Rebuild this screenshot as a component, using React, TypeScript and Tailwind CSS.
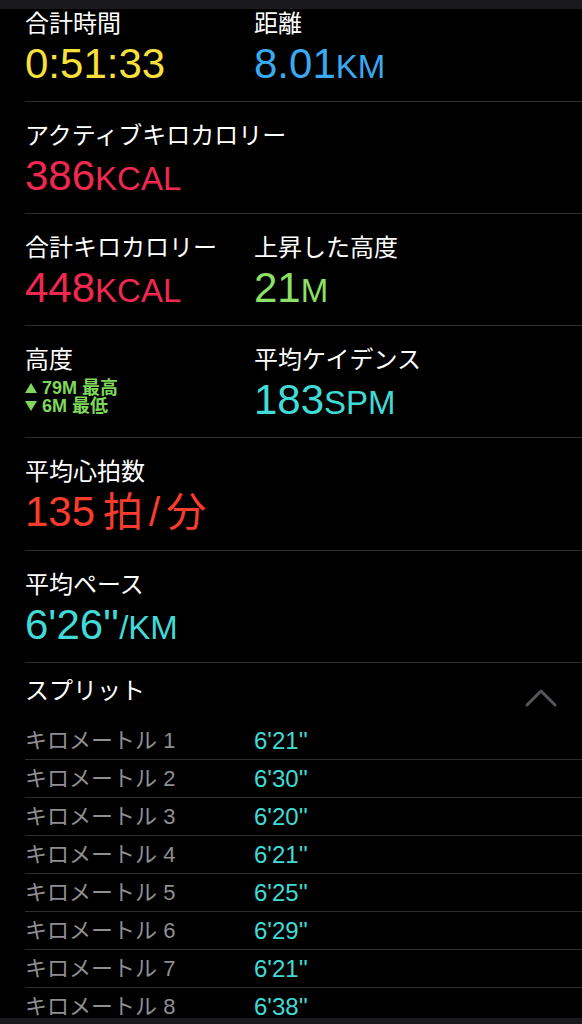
import React from "react";

const font = { fontFamily: '"Liberation Sans", "Noto Sans CJK JP", sans-serif' };

function Value({ num, unit, color }: { num: string; unit?: string; color: string }) {
  return (
    <div className={`mt-[5px] leading-[44px] whitespace-nowrap ${color}`}>
      <span className="text-[42px]">{num}</span>
      {unit && <span className="text-[33px]">{unit}</span>}
    </div>
  );
}

function Label({ children }: { children: React.ReactNode }) {
  return <div className="text-[24px] leading-[26px] text-white whitespace-nowrap">{children}</div>;
}

function Tri({ down }: { down?: boolean }) {
  return (
    <svg width="12" height="12" viewBox="0 0 12 12" className="shrink-0 w-[12px] h-[12px] mr-[5px]">
      <path d={down ? "M0 1 L12 1 L6 11 Z" : "M6 1 L12 11 L0 11 Z"} fill="#7fd85c" />
    </svg>
  );
}

const splits = ["6'21''", "6'30''", "6'20''", "6'21''", "6'25''", "6'29''", "6'21''", "6'38''"];

export default function App() {
  return (
    <div className="relative w-[582px] h-[1024px] overflow-hidden bg-black" style={font}>
      <div className="absolute top-0 left-0 right-0 h-[9px] bg-[#1a1a1c] z-10"></div>
      <div className="absolute bottom-0 left-0 right-0 h-[6px] bg-[#1a1a1c] z-10"></div>

      <div className="-mt-[10px] pl-[25px]">
        {/* 合計時間 / 距離 */}
        <div className="h-[112px] pt-[21px] border-b border-[#2e2e30] flex">
          <div className="w-[229px]">
            <Label>合計時間</Label>
            <Value num="0:51:33" color="text-[#f8e03c]" />
          </div>
          <div>
            <Label>距離</Label>
            <Value num="8.01" unit="KM" color="text-[#3aa9f1]" />
          </div>
        </div>

        <div className="h-[112px] pt-[21px] border-b border-[#2e2e30]">
          <Label>アクティブキロカロリー</Label>
          <Value num="386" unit="KCAL" color="text-[#f0284f]" />
        </div>

        <div className="h-[112px] pt-[21px] border-b border-[#2e2e30] flex">
          <div className="w-[229px]">
            <Label>合計キロカロリー</Label>
            <Value num="448" unit="KCAL" color="text-[#f0284f]" />
          </div>
          <div>
            <Label>上昇した高度</Label>
            <Value num="21" unit="M" color="text-[#8be065]" />
          </div>
        </div>

        <div className="h-[112px] pt-[21px] border-b border-[#2e2e30] flex">
          <div className="w-[229px]">
            <Label>高度</Label>
            <div className="mt-[6px] text-[18px] leading-[18px] font-bold text-[#7fd85c] whitespace-nowrap">
              <div className="flex items-center"><Tri />79M 最高</div>
              <div className="flex items-center"><Tri down />6M 最低</div>
            </div>
          </div>
          <div>
            <Label>平均ケイデンス</Label>
            <Value num="183" unit="SPM" color="text-[#40dbd6]" />
          </div>
        </div>

        <div className="h-[113px] pt-[21px] border-b border-[#2e2e30]">
          <Label>平均心拍数</Label>
          <div className="mt-[5px] leading-[44px] text-[#fa3c2c] whitespace-nowrap">
            <span className="text-[42px]">135</span>
            <span className="text-[40px] ml-[8px]">拍</span>
            <span className="text-[40px] mx-[6px]">/</span>
            <span className="text-[40px]">分</span>
          </div>
        </div>

        <div className="h-[112px] pt-[21px] border-b border-[#2e2e30]">
          <Label>平均ペース</Label>
          <Value num={"6'26''"} unit="/KM" color="text-[#40dbd6]" />
        </div>

        {/* スプリット */}
        <div className="h-[59px] pt-[15px] pr-[24px] flex justify-between">
          <Label>スプリット</Label>
          <svg width="34" height="22" viewBox="0 0 34 22" className="mt-[8px]">
            <path d="M3 19 L17 5 L31 19" fill="none" stroke="#56565a" strokeWidth="3" strokeLinecap="round" strokeLinejoin="round" />
          </svg>
        </div>
        {splits.map((s, i) => (
          <div key={i} className="h-[38px] flex items-center border-b border-[#2e2e30]">
            <div className="w-[229px] text-[22px] text-[#8e8e93] whitespace-nowrap">キロメートル {i + 1}</div>
            <div className="text-[24px] text-[#40dbd6]">{s}</div>
          </div>
        ))}
      </div>
    </div>
  );
}
